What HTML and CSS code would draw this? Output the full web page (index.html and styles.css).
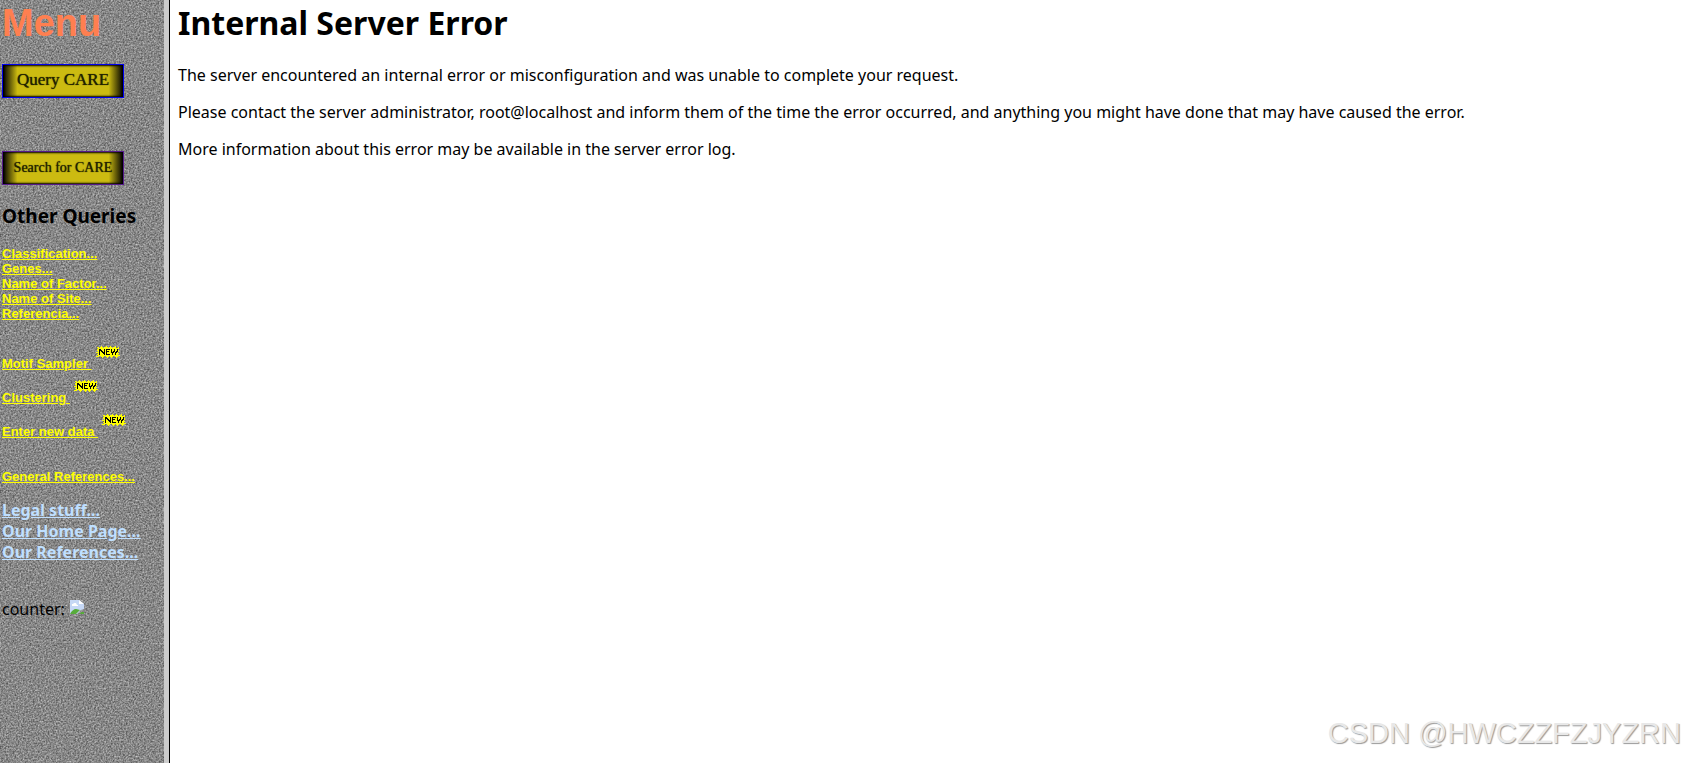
FILE: index.html
```html
<!DOCTYPE html>
<html lang="en">
<head>
	<meta charset="utf-8">
	<title>CARE</title>
	<link rel="stylesheet" href="styles.css">
</head>
<body>
	<!-- burst shape shared by the three NEW marks -->
	<svg class="defs" width="0" height="0">
		<symbol id="new" viewBox="0 0 24 12" shape-rendering="crispEdges">
			<path fill="#ff0" d="M2 2h20v8H2zM1 1h2v1H1zM4 1h3v1H4zM5 0h1v1H5zM8 1h4v1H8zM10 0h1v1h-1zM13 1h3v1h-3zM14 0h1v1h-1zM17 1h3v1h-3zM19 0h1v1h-1zM22 1h1v2h-1zM1 3h1v2H1zM0 6h2v1H0zM1 8h1v1H1zM0 10h3v1H0zM22 4h1v2h-1zM22 7h1v1h-1zM22 9h2v1h-2zM5 10h3v1H5zM6 11h1v1H6zM10 10h3v1h-3zM11 11h1v1h-1zM14 10h3v1h-3zM15 11h1v1h-1zM19 10h3v1h-3zM20 11h1v1h-1z"/>
			<path fill="none" stroke="#000" d="M3.500 9V3M4.500 3v2M5.500 4v2M6.500 5v2M7.500 6v2M8.500 9V3M10.500 3v6M10 3.500h4M10 5.500h3M10 8.500h4M15.500 3v4M16.500 6v3M17.500 5v2M18.500 3v3M19.500 6v3M20.500 5v2M21.500 3v3"/>
		</symbol>
	</svg>
	<div class="frames">
		<nav class="menu">
			<h2 class="title">Menu</h2>
			<a class="button" href="#query">Query CARE</a>
			<a class="button visited" href="#search">Search for CARE</a>
			<h3>Other Queries</h3>
			<div class="list">
				<a href="#class">Classification...</a>
				<a href="#genes">Genes...</a>
				<a href="#factor">Name of Factor...</a>
				<a href="#site">Name of Site...</a>
				<a href="#ref">Referencia...</a>
			</div>
			<div class="list tools">
				<div class="row"><a href="#motif">Motif Sampler&nbsp;</a><svg class="new"><use href="#new"/></svg></div>
				<div class="row"><a href="#cluster">Clustering&nbsp;</a><svg class="new"><use href="#new"/></svg></div>
				<div class="row"><a href="#enter">Enter new data&nbsp;</a><svg class="new"><use href="#new"/></svg></div>
			</div>
			<div class="list">
				<a href="#general">General References...</a>
			</div>
			<div class="about">
				<a href="#legal">Legal stuff...</a>
				<a href="#home">Our Home Page...</a>
				<a href="#our">Our References...</a>
			</div>
			<p class="counter">counter:
				<svg width="16" height="16" viewBox="0 0 16 16">
					<path fill="#c6d8f5" d="M1 1h9l5 4v5l-3 1-4 4H1z"/>
					<path fill="#fff" d="M10 1l5 4h-5zM3 5h1l1-1h2l1 2h1v1H3z"/>
					<path fill="#57ab3a" d="M1 15c1-3 4-5 6-5l4 1-4 4zM12 13h3v2h-4z"/>
				</svg>
			</p>
		</nav>
		<main>
			<h1>Internal Server Error</h1>
			<p>The server encountered an internal error or misconfiguration and was unable to complete your request.</p>
			<p>Please contact the server administrator, root@localhost and inform them of the time the error occurred, and anything you might have done that may have caused the error.</p>
			<p>More information about this error may be available in the server error log.</p>
		</main>
	</div>
	<div class="watermark">CSDN @HWCZZFZJYZRN</div>
</body>
</html>
```
FILE: styles.css
```css
body {
	margin: 0;
	background: #fff;
	color: #000;
	font-family: "Noto Sans", "Open Sans", sans-serif;
	font-size: 16px;
	line-height: 21px;
}

.defs {
	position: absolute;
}

.frames {
	display: flex;
	min-height: 100vh;
}

/* left frame, grey stone texture */
.menu {
	box-sizing: border-box;
	flex: 0 0 170px;
	padding: 0 2px;
	border-right: 1px solid #000;
	box-shadow: inset -5px 0 #ccc;
	background: #888 url("data:image/svg+xml,%3Csvg xmlns='http://www.w3.org/2000/svg' width='256' height='256'%3E%3Cfilter id='s' x='0' y='0' width='100%25' height='100%25' color-interpolation-filters='sRGB'%3E%3CfeTurbulence type='fractalNoise' baseFrequency='.6' numOctaves='3' stitchTiles='stitch'/%3E%3CfeColorMatrix values='.6 0 0 0 .23 .6 0 0 0 .23 .6 0 0 0 .23 0 0 0 0 1'/%3E%3C/filter%3E%3Crect width='256' height='256' filter='url(%23s)'/%3E%3C/svg%3E");
}

.title {
	margin: 0 0 18px;
	color: #ff7f50;
	font-family: "Liberation Sans", Arial, sans-serif;
	font-size: 38px;
	line-height: 46px;
}

.button {
	display: block;
	box-sizing: border-box;
	width: 122px;
	height: 34px;
	margin-bottom: 53px;
	border: 1px solid #00e;
	background: linear-gradient(90deg, #000, #cb1 12%, #cb1 88%, #000);
	box-shadow: inset 0 0 2px 1px #000;
	color: #220;
	font-family: "Liberation Serif", serif;
	font-size: 17px;
	line-height: 30px;
	text-align: center;
	text-decoration: none;
	text-shadow: 0 0 1px #220;
}

.visited {
	margin-bottom: 19px;
	border-color: #551a8b;
	font-size: 14px;
	line-height: 32px;
}

h3 {
	margin: 0 0 18px;
	font-size: 19px;
	line-height: 24px;
}

.list {
	display: flex;
	flex-direction: column;
	align-items: flex-start;
	margin-bottom: 16px;
	font: bold 13px/15px "Liberation Sans", Arial, sans-serif;
}

.list a {
	color: #ff0;
}

.tools {
	margin-bottom: 30px;
}

.row {
	display: flex;
	align-items: flex-end;
	gap: 4px;
	height: 34px;
}

.new {
	width: 24px;
	height: 12px;
	margin-bottom: 13px;
}

.about {
	display: flex;
	flex-direction: column;
	align-items: flex-start;
	font-weight: bold;
}

.about a {
	color: #bfdfff;
}

.counter {
	margin: 36px 0 0;
}

/* right frame */
main {
	flex: 1;
	padding: 0 8px;
}

h1 {
	margin: 1px 0 21px;
	font-size: 32px;
	line-height: 43px;
}

main p {
	margin: 0 0 16px;
}

.watermark {
	position: absolute;
	right: 4px;
	bottom: 12px;
	color: #e8e8e8;
	font-family: "Liberation Sans", Arial, sans-serif;
	font-size: 29px;
	line-height: 36px;
	text-shadow: 1px 1px 1px #999;
}
```
